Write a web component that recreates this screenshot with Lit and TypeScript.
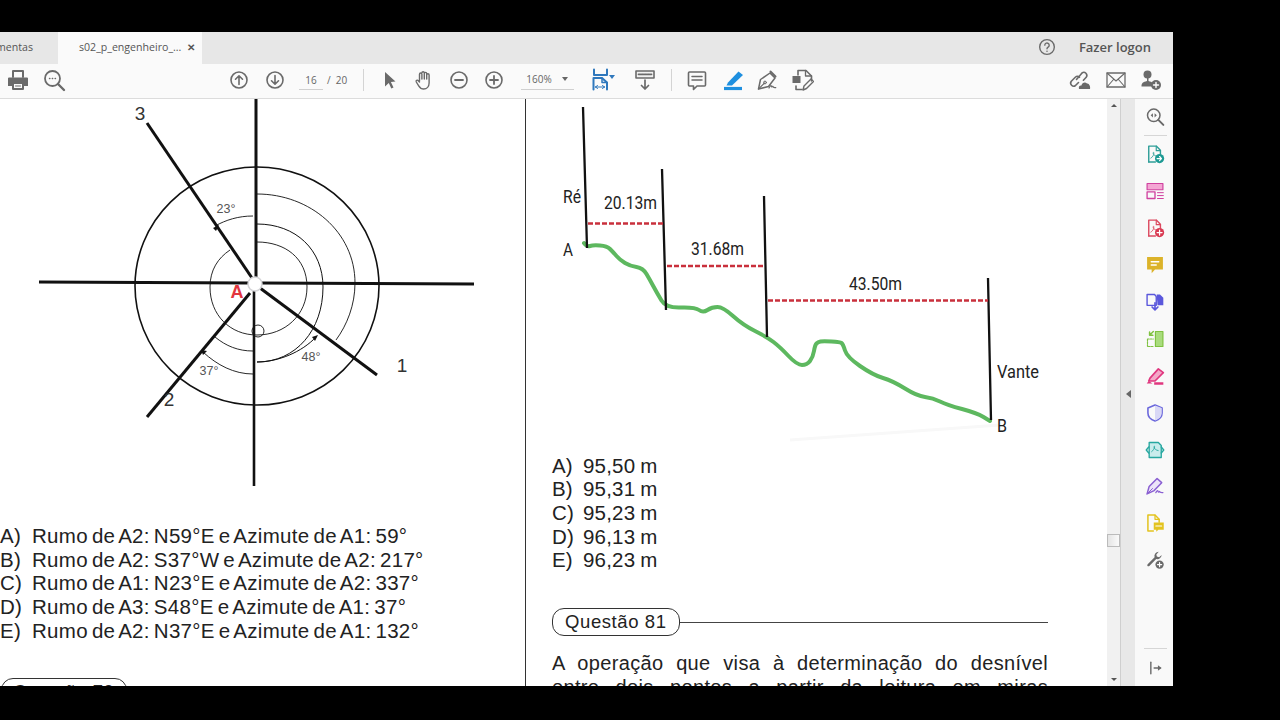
import { LitElement, html, css, svg } from 'lit';
import { customElement } from 'lit/decorators.js';

const G = '#6a6a6a';

const icon = (body: unknown, size = 24) =>
  html`<svg class="ico" width=${size} height=${size} viewBox="0 0 24 24" fill="none" stroke-linecap="round" stroke-linejoin="round">${body}</svg>`;

const toolIcons: Record<string, unknown> = {
  print: svg`<path d="M7 9V3h10v6" stroke=${G} stroke-width="2"/><path d="M3 9.5h18a1 1 0 0 1 1 1V18h-4v-3H6v3H2v-7.5a1 1 0 0 1 1-1z" fill=${G}/><path d="M7 15h10v6H7z" stroke=${G} stroke-width="2"/><path d="M9.5 18h5" stroke=${G}/>`,
  search: svg`<circle cx="10.5" cy="10.5" r="7.5" stroke=${G} stroke-width="1.8"/><path d="M16 16l6 6" stroke=${G} stroke-width="2.4"/><path d="M7.5 10.5h.4M10.3 10.5h.4M13.1 10.5h.4" stroke=${G} stroke-width="1.4"/>`,
  up: svg`<circle cx="12" cy="12" r="8" stroke=${G} stroke-width="1.6"/><path d="M12 16.5V8M8.5 11.2L12 7.8l3.5 3.4" stroke=${G} stroke-width="1.6"/>`,
  down: svg`<circle cx="12" cy="12" r="8" stroke=${G} stroke-width="1.6"/><path d="M12 7.5V16M8.5 12.8l3.5 3.4 3.5-3.4" stroke=${G} stroke-width="1.6"/>`,
  cursor: svg`<path d="M7 4l10.5 9.5-4.6.4 2.6 5.6-2.2 1-2.5-5.6L7 18.5z" fill=${G}/>`,
  hand: svg`<path d="M7.5 13V6.2a1.2 1.2 0 0 1 2.4 0V11M9.9 5a1.2 1.2 0 0 1 2.4 0v6M12.3 5.6a1.2 1.2 0 0 1 2.4 0V11M14.7 7a1.2 1.2 0 0 1 2.4 0v8c0 3.4-2.3 6-5.4 6-2.7 0-3.8-1.2-5-3.2L4.3 14c-.8-1.4 1-2.5 2-1.3L7.5 14" stroke=${G} stroke-width="1.4"/>`,
  minus: svg`<circle cx="12" cy="12" r="8" stroke=${G} stroke-width="1.6"/><path d="M8 12h8" stroke=${G} stroke-width="1.8"/>`,
  plus: svg`<circle cx="12" cy="12" r="8" stroke=${G} stroke-width="1.6"/><path d="M8 12h8M12 8v8" stroke=${G} stroke-width="1.8"/>`,
  fit: svg`<path d="M4 1.500v5.500h13V1.500" stroke="#2f78bd" stroke-width="2"/><path d="M3.500 21.500V10h8.500l5 4.500v7" stroke="#2f78bd" stroke-width="2"/><path d="M12 10v4.500h5" stroke="#2f78bd" stroke-width="1.5"/><path d="M5.500 19h9M5.500 19l2-1.500M5.500 19l2 1.500M14.500 19l-2-1.500M14.500 19l-2 1.500" stroke="#2f78bd" stroke-width="1"/>`,
  keys: svg`<rect x="3" y="3" width="18" height="7" fill="#f1f1f1" stroke=${G} stroke-width="1.6"/><path d="M5.500 6.300h13" stroke=${G} stroke-width="1.8" stroke-dasharray="2 1"/><path d="M12 12v9M8.500 17.500l3.500 3.500 3.500-3.500" stroke=${G} stroke-width="1.7"/>`,
  comment: svg`<path d="M4.500 4h15a1 1 0 0 1 1 1v12a1 1 0 0 1-1 1H12l-3.500 3.500V18h-4a1 1 0 0 1-1-1V5a1 1 0 0 1 1-1z" stroke=${G} stroke-width="1.6"/><path d="M7 8.500h10M7 12h10" stroke=${G} stroke-width="1.5"/>`,
  highlight: svg`<path d="M7 14.500L17.500 3.500l4.500 3.500L11 17.500H5.500z" fill="#1e8fdf"/><path d="M3 20.500h18" stroke="#1e8fdf" stroke-width="3.200" stroke-linecap="butt"/>`,
  sign: svg`<path d="M3.500 21l2-9.500L15 5l5 5-6.500 8.500z" stroke=${G} stroke-width="1.500"/><path d="M3.500 21l6-6" stroke=${G} stroke-width="1.100"/><circle cx="10" cy="14.500" r="1.400" stroke=${G}/><path d="M14 20c1-2 2-3 2.300-2 .3 1 .7 1.500 1.500.2.4 1.800 1.500 1.700 3 1.400" stroke=${G} stroke-width="1.200"/><path d="M15.500 3.500l5 5" stroke=${G} stroke-width="2"/>`,
  stamp: svg`<path d="M8 7V2.500h8L21.500 8v5M6 18v3.500h6" stroke=${G} stroke-width="1.600"/><path d="M15.500 2.500V8h6" stroke=${G} stroke-width="1.300"/><rect x="2.500" y="8" width="8" height="7" fill=${G}/><path d="M13 22l1-4 7-7 2.500 2.500-7 7z" stroke=${G} stroke-width="1.400"/>`,
  link: svg`<path d="M10.500 14.500L7.500 17.500a3 3 0 0 1-4.200-4.200l4-4a3 3 0 0 1 4.200 0" stroke=${G} stroke-width="1.600"/><path d="M8.500 11.500l3-3.500 2.500-3a3 3 0 0 1 4.200 4.200l-2.800 3" stroke=${G} stroke-width="1.600"/><path d="M11 21c-.8-3 1.200-4 2.400-3.500C14 15 17 13.500 19 15.500c2-.5 3.800 3 3 5.500z" fill=${G}/>`,
  mail: svg`<rect x="3" y="5" width="18" height="14" fill="#fafafa" stroke=${G} stroke-width="1.300"/><path d="M3 5l9 8 9-8M3 19l6.500-7.500M21 19l-6.500-7.500" stroke=${G} stroke-width="1.100"/>`,
  user: svg`<circle cx="8.500" cy="6.500" r="4" fill=${G}/><path d="M8 10h1.500v3c4 1 5 2 5 5.500H2.500C2.500 15 4 14 8 13z" fill=${G}/><circle cx="17" cy="17" r="5" fill=${G}/><path d="M14.500 17h5M17 14.500v5" stroke="#fff" stroke-width="1.400"/>`,
  help: svg`<circle cx="12" cy="12" r="8" stroke=${G} stroke-width="1.500"/><path d="M9.600 10a2.400 2.400 0 1 1 3.600 2.100c-.8.500-1.200.9-1.200 1.900" stroke=${G} stroke-width="1.500"/><path d="M12 16.600v.1" stroke=${G} stroke-width="1.700"/>`,
};

const page = (c: string) =>
  svg`<path d="M4.500 21.500v-19h9l5 5V12" stroke=${c} stroke-width="1.700"/><path d="M13.500 2.500V8h5" stroke=${c} stroke-width="1.400"/><path d="M7 17c2-1 4-4 3.600-6.500-.3-1.500-1.200 0-.6 1.400.6 1.200 2 2.400 3.500 2.600" stroke=${c} stroke-width="1"/>`;

const railIcons = [
  svg`<circle cx="10.500" cy="10" r="7.500" stroke=${G} stroke-width="1.800"/><path d="M16 15.500l6 6" stroke=${G} stroke-width="2.400"/><path d="M9.500 7.500L6.800 10l2.700 2.500zM11.500 7.500l2.700 2.500-2.700 2.500z" fill=${G}/>`,
  svg`${page('#2e9e98')}<path d="M4.500 21.500h8" stroke="#2e9e98" stroke-width="1.700"/><circle cx="17.500" cy="17.500" r="5.500" fill="#1d9a94"/><path d="M14.500 17.500h5M17.500 15l2.300 2.500-2.300 2.500" stroke="#fff" stroke-width="1.400"/>`,
  svg`<rect x="2.500" y="3" width="19" height="7.500" fill="#f4a6d4" stroke="#d0419f" stroke-width="1.400"/><rect x="2.500" y="13" width="9.500" height="8" stroke="#d0419f" stroke-width="1.600"/><path d="M15 14h7M15 17.500h7M15 21h7" stroke="#d0419f" stroke-width="1.200"/>`,
  svg`${page('#dc4a60')}<path d="M4.500 21.500h8" stroke="#dc4a60" stroke-width="1.700"/><circle cx="17.500" cy="17.500" r="5.500" fill="#d93a52"/><path d="M14.500 17.500h6M17.500 14.500v6" stroke="#fff" stroke-width="1.500"/>`,
  svg`<path d="M2.500 2.500h19v15H12l-4 4.500v-4.500H2.500z" fill="#dcb32a"/><path d="M7.500 8h9M7.500 12h6" stroke="#fff" stroke-width="1.700"/>`,
  svg`<path d="M2.500 3h9l2 2.500V16h-11z" stroke="#5b58dc" stroke-width="1.700"/><path d="M14 3h4l4 4v9h-7z" fill="#5b58dc"/><path d="M12 13v8M8.500 18l3.500 3.500 3.500-3.500" stroke="#5b58dc" stroke-width="2"/>`,
  svg`<rect x="12.500" y="3" width="9" height="18" fill="#a9dc7d" stroke="#7fc241" stroke-width="1.400"/><path d="M3 12v9h7M3 12h7" stroke="#7fc241" stroke-width="1.400" stroke-dasharray="2 1.400"/><path d="M10 3L5.500 7.500M5.500 3.500v4h4" stroke="#7fc241" stroke-width="1.800"/>`,
  svg`<path d="M6 14.500L16 3.500l6 4.500L12 18H4.500z" fill="#f3a8c8" stroke="#e0377f" stroke-width="2"/><path d="M4.500 18L2 21h7" fill="#e0377f"/><path d="M11 21h11" stroke="#e0377f" stroke-width="3" stroke-linecap="butt"/>`,
  svg`<path d="M12 2.500l8.500 3.500v6c0 4.500-3.500 8-8.500 9.500-5-1.500-8.500-5-8.500-9.500V6z" stroke="#6b68dc" stroke-width="1.900"/><path d="M12 3v18c4.500-1.500 8-4.500 8-9V6z" fill="#d9d8f6"/>`,
  svg`<path d="M5 3h11l3.500 3.500V21H5z" fill="#c9ecec" stroke="#27a7a0" stroke-width="1.600"/><path d="M8 14c2-1.500 3.500-4 3.500-6 0-1-.9-.7-.7.4.3 2 2.400 4 5 4.300" stroke="#27a7a0" stroke-width="1.100"/><path d="M4.500 8.500L1.500 12l3 3.500M19.500 8.500l3 3.500-3 3.500" stroke="#27a7a0" stroke-width="1.700"/>`,
  svg`<path d="M2.500 21.500l2.500-9L14.500 3l5.500 5-9 9.500z" fill="#ece4f8" stroke="#8a5fd2" stroke-width="1.800"/><path d="M2.500 21.500l6.500-6.500" stroke="#8a5fd2" stroke-width="1.200"/><path d="M13 20c1.400-2.500 2.400-3 2.600-1.800.2 1.300 1 1.600 1.900.3.300 1.700 1.800 1.700 4 1.500" stroke="#8a5fd2" stroke-width="1.500"/>`,
  svg`<path d="M3.500 21.500v-19h8.500L17 7.500V11M3.500 21.500H10" stroke="#e3c31f" stroke-width="1.800"/><path d="M12 2.500v5h5" stroke="#e3c31f" stroke-width="1.500"/><path d="M10.500 11.500h12V20H16l-2.500 2.500V20h-3z" fill="#e3c31f"/><path d="M13 15.500h7" stroke="#fff" stroke-width="1.300"/>`,
  svg`<path d="M16.500 2a5.200 5.200 0 0 0-5 6.700L3.200 17c-1.400 1.400.6 3.600 2 2.100l8.300-8.300A5.200 5.200 0 0 0 20 6l-3 2.600-2.800-.7-.6-2.600L16.500 2z" fill=${G}/><circle cx="17.500" cy="17.500" r="5" fill=${G}/><path d="M15 17.500h5M17.500 15v5" stroke="#fff" stroke-width="1.400"/>`,
];

const collapse = svg`<path d="M7 5v14" stroke=${G} stroke-width="1.700"/><path d="M11 12h7" stroke=${G} stroke-width="1.700"/><path d="M15.500 8.800L20 12l-4.500 3.200z" fill=${G}/>`;

const compass = svg`
  <g stroke="#111" fill="none" stroke-linecap="butt">
    <ellipse cx="257" cy="286" rx="122" ry="119" stroke-width="1.600"/>
    <path d="M257 194C310 194 355 232 355 283C355 305 347 325 336 340" stroke-width=".9"/>
    <path d="M257 224C296 224 323 250 323 287C323 330 296 362 257 362C278 362 302 352 316 337" stroke-width="1"/>
    <path d="M257 242C285 242 307 258 307 287C307 315 285 335 257 335C230 335 210 315 210 287C210 270 218 258 230 250" stroke-width=".9"/>
    <path d="M253 216C238 216 226 220 215 226" stroke-width=".9"/>
    <path d="M253 351C238 351 226 346 215 337" stroke-width=".9"/>
    <path d="M253 374C234 374 217 365 203 352" stroke-width=".9"/>
    <circle cx="258" cy="331" r="6" stroke-width=".9"/>
    <path d="M256 99V277" stroke-width="3"/>
    <path d="M254 290V486" stroke-width="2.600"/>
    <path d="M39 282L250 283M262 283L474 284" stroke-width="3"/>
    <path d="M147 123L252 278" stroke-width="3"/>
    <path d="M147 417L250 293" stroke-width="3"/>
    <path d="M260 288L377 375" stroke-width="3"/>
  </g>
  <path d="M213 228l6-3-3 6zM201 350l6 1-4 4zM318 335l-6 2 3 4z" fill="#111"/>
  <circle cx="255" cy="284" r="7" fill="#fff" stroke="#d5d5d8" stroke-width="1.500"/>
  <text class="cap" x="237" y="298" text-anchor="middle" fill="#e2363f" font-size="18" font-weight="700">A</text>
  <text class="cap num" x="140" y="120" text-anchor="middle">3</text>
  <text class="cap num" x="169" y="406" text-anchor="middle">2</text>
  <text class="cap num" x="402" y="372" text-anchor="middle">1</text>
  <text class="cap deg" x="226" y="213" text-anchor="middle">23°</text>
  <text class="cap deg" x="311" y="361" text-anchor="middle">48°</text>
  <text class="cap deg" x="209" y="375" text-anchor="middle">37°</text>
`;

const ground = [
  [584, 243], [587, 247], [593, 245], [607, 246], [613, 252], [620, 260], [630, 266], [643, 268],
  [650, 280], [657, 293], [666, 308], [695, 307], [703, 313], [712, 307], [723, 307], [743, 325],
  [767, 337], [780, 347], [797, 365], [807, 365], [813, 357], [815, 345], [818, 342], [823, 341],
  [840, 342], [843, 344], [847, 357], [873, 375], [893, 381], [917, 396], [933, 398], [947, 405],
  [977, 413], [990, 421],
];

// rounds the corners of the ground line through the segment midpoints
const smooth = (pts: number[][]) => {
  let d = `M${pts[0][0]} ${pts[0][1]}`;
  for (let i = 1; i < pts.length - 1; i++) {
    const mx = (pts[i][0] + pts[i + 1][0]) / 2;
    const my = (pts[i][1] + pts[i + 1][1]) / 2;
    d += `Q${pts[i][0]} ${pts[i][1]} ${mx} ${my}`;
  }
  const last = pts[pts.length - 1];
  return `${d}L${last[0]} ${last[1]}`;
};

const profile = svg`
  <path d="M790 440L1000 425" stroke="#f8f8f8" stroke-width="3" fill="none"/>
  <path d=${smooth(ground)} fill="none" stroke="#5db85f" stroke-width="4" stroke-linejoin="round" stroke-linecap="round"/>
  <g stroke="#111" stroke-width="2.300">
    <path d="M583 107L587 248M662 169L666 310M764 196L767 337M988 278L991 420"/>
  </g>
  <g stroke="#c9303c" stroke-width="2.400" stroke-dasharray="5 2" fill="none">
    <path d="M588 223.500H664M667 266H765M768 300.500H988"/>
  </g>
  <text class="lbl" x="563" y="203" textLength="18" lengthAdjust="spacingAndGlyphs">Ré</text>
  <text class="lbl" x="563" y="256" textLength="10" lengthAdjust="spacingAndGlyphs">A</text>
  <text class="lbl" x="604" y="209" textLength="53" lengthAdjust="spacingAndGlyphs">20.13m</text>
  <text class="lbl" x="691" y="255" textLength="53" lengthAdjust="spacingAndGlyphs">31.68m</text>
  <text class="lbl" x="849" y="290" textLength="53" lengthAdjust="spacingAndGlyphs">43.50m</text>
  <text class="lbl" x="997" y="378" textLength="42" lengthAdjust="spacingAndGlyphs">Vante</text>
  <text class="lbl" x="997" y="432" textLength="10" lengthAdjust="spacingAndGlyphs">B</text>
`;

const leftOptions = [
  ['A)', 'Rumo de A2: N59°E e Azimute de A1: 59°'],
  ['B)', 'Rumo de A2: S37°W e Azimute de A2: 217°'],
  ['C)', 'Rumo de A1: N23°E e Azimute de A2: 337°'],
  ['D)', 'Rumo de A3: S48°E e Azimute de A1: 37°'],
  ['E)', 'Rumo de A2: N37°E e Azimute de A1: 132°'],
];

const rightOptions = [
  ['A)', '95,50 m'],
  ['B)', '95,31 m'],
  ['C)', '95,23 m'],
  ['D)', '96,13 m'],
  ['E)', '96,23 m'],
];

@customElement('app-root')
export class AppRoot extends LitElement {
  static styles = css`
    :host {
      display: block;
      width: 1280px;
      height: 720px;
      box-sizing: border-box;
      padding-top: 32px;
      background: #000;
      overflow: hidden;
      font-family: 'Open Sans', sans-serif;
    }
    .app {
      width: 1173px;
      height: 654px;
      display: flex;
      flex-direction: column;
      background: #fff;
      overflow: hidden;
    }
    .ico { display: block; flex: none; }

    .tabs {
      height: 32px;
      flex: none;
      display: flex;
      align-items: center;
      background: #e7e7e7;
      color: #555;
      font-size: 10.6px;
    }
    .tab-off {
      width: 58px;
      height: 100%;
      display: flex;
      align-items: center;
      justify-content: flex-end;
      padding: 0 25px 2px 0;
      box-sizing: border-box;
      overflow: hidden;
      white-space: nowrap;
    }
    .tab-on {
      width: 144px;
      height: 100%;
      padding: 0 0 2px 21px;
      box-sizing: border-box;
      display: flex;
      align-items: center;
      gap: 6px;
      background: #fafafa;
      white-space: nowrap;
    }
    .tab-x { font-size: 10px; font-weight: 700; color: #555; }
    .tab-right {
      margin-left: auto;
      display: flex;
      align-items: center;
      padding: 0 22px 3px 0;
    }
    .login {
      margin-left: 21px;
      font-size: 13px;
      font-weight: 600;
      color: #555;
    }

    .toolbar {
      height: 35px;
      flex: none;
      box-sizing: border-box;
      padding: 0 10px 3px 6px;
      display: flex;
      align-items: center;
      background: #fafafa;
      border-bottom: 1px solid #dcdcdc;
      color: #666;
      font-size: 10px;
    }
    .sep { width: 1px; height: 22px; background: #d4d4d4; flex: none; }
    .pg {
      width: 24px;
      margin: 0 4px 0 12px;
      height: 20px;
      line-height: 20px;
      text-align: center;
      border-bottom: 1px solid #d0d0d0;
      box-sizing: border-box;
    }
    .zoom {
      width: 53px;
      margin-left: 15px;
      height: 20px;
      line-height: 20px;
      padding: 0 6px 0 5px;
      box-sizing: border-box;
      border-bottom: 1px solid #d0d0d0;
      display: flex;
      align-items: center;
      justify-content: space-between;
    }
    .caret {
      width: 0;
      height: 0;
      border-left: 3px solid transparent;
      border-right: 3px solid transparent;
      border-top: 4px solid #666;
      flex: none;
    }
    .caret-blue { border-top-color: #2f78bd; margin-left: -5px; margin-bottom: 5px; }

    .body { flex: 1; display: flex; min-height: 0; }
    .doc {
      width: 1107px;
      flex: none;
      display: flex;
      overflow: hidden;
      font-family: 'Liberation Sans', Arial, sans-serif;
      color: #222;
    }
    .col-l {
      width: 526px;
      flex: none;
      box-sizing: border-box;
      border-right: 1px solid #333;
    }
    .col-r { width: 581px; flex: none; }
    .fig { display: block; }
    .opts { font-size: 20.5px; line-height: 23.7px; }
    .opt { display: flex; white-space: nowrap; }
    .opt b { font-weight: 400; width: 32px; flex: none; }
    .opts-l { letter-spacing: 0.3px; word-spacing: -2px; }
    .opts-r { margin: 9.6px 0 0 26px; letter-spacing: 0.2px; word-spacing: -1px; }
    .opts-r .opt b { width: 31px; }

    .qhead { display: flex; align-items: center; }
    .pill {
      height: 28px;
      box-sizing: border-box;
      border: 1px solid #333;
      border-radius: 12px;
      padding: 0 12px;
      font-size: 18.5px;
      line-height: 26px;
      letter-spacing: 0.6px;
      white-space: nowrap;
    }
    .rule { flex: 1; height: 1px; background: #444; }
    .qhead-l { margin: 35px 0 0 1px; }
    .qhead-l .pill { padding: 0 11px; }
    .qhead-r { margin: 36px 59px 0 26px; }
    .para {
      margin: 15px 59px 0 26px;
      font-size: 20px;
      line-height: 24px;
      text-align: justify;
      letter-spacing: 0.35px;
    }

    .vbar {
      width: 14px;
      flex: none;
      box-sizing: border-box;
      background: #f1f1f1;
      border-right: 1px solid #cfcfcf;
      display: flex;
      flex-direction: column;
      align-items: center;
      justify-content: space-between;
      padding: 5px 0;
      position: relative;
    }
    .thumb {
      position: absolute;
      left: 0;
      top: 435px;
      width: 13px;
      height: 13px;
      box-sizing: border-box;
      border: 1px solid #bbb;
      background: linear-gradient(90deg, #e4e4e4, #fafafa);
    }
    .tri-up { width: 0; height: 0; border: 3px solid transparent; border-top: 0; border-bottom: 3px solid #555; }
    .tri-dn { width: 0; height: 0; border: 3px solid transparent; border-bottom: 0; border-top: 3px solid #555; }
    .split {
      width: 14px;
      flex: none;
      background: #e8e8e8;
      display: flex;
      align-items: center;
      justify-content: center;
    }
    .tri-l {
      width: 0;
      height: 0;
      margin-top: 2px;
      border-top: 4.5px solid transparent;
      border-bottom: 4.5px solid transparent;
      border-right: 5px solid #666;
    }
    .rail {
      flex: 1;
      display: flex;
      flex-direction: column;
      align-items: center;
      background: #f9f9f9;
    }
    .rail-btn {
      height: 36.9px;
      flex: none;
      display: flex;
      align-items: center;
      justify-content: center;
      padding-left: 2px;
    }
    .rail-first { height: 36px; }
    .rail-sep { width: 23px; height: 1px; background: #d6d6d6; flex: none; margin-left: 2px; }
    .rail-end { margin-top: auto; }

    .cap { font-family: 'Liberation Sans', Arial, sans-serif; }
    .num { font-size: 19px; fill: #333; }
    .deg { font-size: 12.5px; fill: #555; }
    .lbl { font-family: Roboto, sans-serif; font-size: 17.5px; fill: #222; }
  `;

  private tool(name: string, gap = 0, size = 24) {
    return html`<span style="margin-left:${gap}px">${icon(toolIcons[name], size)}</span>`;
  }

  private options(rows: string[][]) {
    return rows.map((r) => html`<div class="opt"><b>${r[0]}</b><span>${r[1]}</span></div>`);
  }

  render() {
    const rest = railIcons.slice(1);
    return html`
      <div class="app">
        <div class="tabs">
          <div class="tab-off">Ferramentas</div>
          <div class="tab-on">s02_p_engenheiro_... <span class="tab-x">✕</span></div>
          <div class="tab-right">
            ${icon(toolIcons.help, 22)}
            <span class="login">Fazer logon</span>
          </div>
        </div>
        <div class="toolbar">
          ${this.tool('print')}
          ${this.tool('search', 12)}
          ${this.tool('up', 161)}
          ${this.tool('down', 12)}
          <span class="pg">16</span>
          <span>/ &nbsp;20</span>
          <span class="sep" style="margin:0 14px 0 16px"></span>
          ${this.tool('cursor')}
          ${this.tool('hand', 10)}
          ${this.tool('minus', 11)}
          ${this.tool('plus', 11)}
          <span class="zoom">160% <i class="caret"></i></span>
          ${this.tool('fit', 16)}
          <i class="caret caret-blue"></i>
          ${this.tool('keys', 18)}
          <span class="sep" style="margin:0 13px 0 14px"></span>
          ${this.tool('comment')}
          ${this.tool('highlight', 12)}
          ${this.tool('sign', 10)}
          ${this.tool('stamp', 11)}
          <span style="margin-left:auto"></span>
          ${this.tool('link')}
          ${this.tool('mail', 12)}
          ${this.tool('user', 11)}
        </div>
        <div class="body">
          <div class="doc">
            <div class="col-l">
              <svg class="fig" width="525" height="425" viewBox="0 99 525 425">${compass}</svg>
              <div class="opts opts-l">${this.options(leftOptions)}</div>
              <div class="qhead qhead-l"><div class="pill">Questão 79</div></div>
            </div>
            <div class="col-r">
              <svg class="fig" width="581" height="345" viewBox="526 99 581 345">${profile}</svg>
              <div class="opts opts-r">${this.options(rightOptions)}</div>
              <div class="qhead qhead-r"><div class="pill">Questão 81</div><div class="rule"></div></div>
              <p class="para">A operação que visa à determinação do desnível entre dois pontos a partir da leitura em miras graduadas é o nivelamento geométrico.</p>
            </div>
          </div>
          <div class="vbar"><i class="tri-up"></i><i class="thumb"></i><i class="tri-dn"></i></div>
          <div class="split"><i class="tri-l"></i></div>
          <div class="rail">
            <div class="rail-btn rail-first">${icon(railIcons[0], 20)}</div>
            <div class="rail-sep"></div>
            ${rest.map((b) => html`<div class="rail-btn">${icon(b, 20)}</div>`)}
            <div class="rail-sep rail-end"></div>
            <div class="rail-btn">${icon(collapse, 20)}</div>
          </div>
        </div>
      </div>
    `;
  }
}
